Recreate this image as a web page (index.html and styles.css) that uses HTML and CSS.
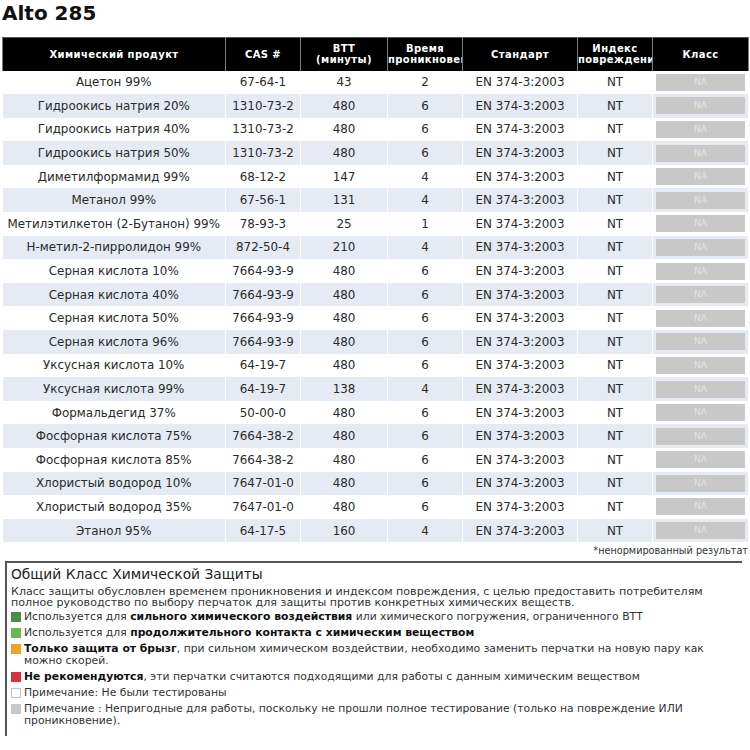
FILE: index.html
```html
<!DOCTYPE html>
<html lang="ru">
<head>
<meta charset="utf-8">
<title>Alto 285</title>
<link rel="stylesheet" href="styles.css">
</head>
<body>
<h1 class="title">Alto 285</h1>
<table class="chem">
  <colgroup>
    <col class="c1"><col class="c2"><col class="c3"><col class="c4"><col class="c5"><col class="c6"><col class="c7">
  </colgroup>
  <thead>
    <tr>
      <th><div class="hc">Химический продукт</div></th>
      <th><div class="hc">CAS #</div></th>
      <th><div class="hc">BTT<br>(минуты)</div></th>
      <th><div class="hc">Время<br>проникновения</div></th>
      <th><div class="hc">Стандарт</div></th>
      <th><div class="hc">Индекс<br>повреждения</div></th>
      <th><div class="hc">Класс</div></th>
    </tr>
  </thead>
  <tbody>
    <tr><td>Ацетон 99%</td><td>67-64-1</td><td>43</td><td>2</td><td>EN 374-3:2003</td><td>NT</td><td><span class="na">NA</span></td></tr>
    <tr><td>Гидроокись натрия 20%</td><td>1310-73-2</td><td>480</td><td>6</td><td>EN 374-3:2003</td><td>NT</td><td><span class="na">NA</span></td></tr>
    <tr><td>Гидроокись натрия 40%</td><td>1310-73-2</td><td>480</td><td>6</td><td>EN 374-3:2003</td><td>NT</td><td><span class="na">NA</span></td></tr>
    <tr><td>Гидроокись натрия 50%</td><td>1310-73-2</td><td>480</td><td>6</td><td>EN 374-3:2003</td><td>NT</td><td><span class="na">NA</span></td></tr>
    <tr><td>Диметилформамид 99%</td><td>68-12-2</td><td>147</td><td>4</td><td>EN 374-3:2003</td><td>NT</td><td><span class="na">NA</span></td></tr>
    <tr><td>Метанол 99%</td><td>67-56-1</td><td>131</td><td>4</td><td>EN 374-3:2003</td><td>NT</td><td><span class="na">NA</span></td></tr>
    <tr><td>Метилэтилкетон (2-Бутанон) 99%</td><td>78-93-3</td><td>25</td><td>1</td><td>EN 374-3:2003</td><td>NT</td><td><span class="na">NA</span></td></tr>
    <tr><td>Н-метил-2-пирролидон 99%</td><td>872-50-4</td><td>210</td><td>4</td><td>EN 374-3:2003</td><td>NT</td><td><span class="na">NA</span></td></tr>
    <tr><td>Серная кислота 10%</td><td>7664-93-9</td><td>480</td><td>6</td><td>EN 374-3:2003</td><td>NT</td><td><span class="na">NA</span></td></tr>
    <tr><td>Серная кислота 40%</td><td>7664-93-9</td><td>480</td><td>6</td><td>EN 374-3:2003</td><td>NT</td><td><span class="na">NA</span></td></tr>
    <tr><td>Серная кислота 50%</td><td>7664-93-9</td><td>480</td><td>6</td><td>EN 374-3:2003</td><td>NT</td><td><span class="na">NA</span></td></tr>
    <tr><td>Серная кислота 96%</td><td>7664-93-9</td><td>480</td><td>6</td><td>EN 374-3:2003</td><td>NT</td><td><span class="na">NA</span></td></tr>
    <tr><td>Уксусная кислота 10%</td><td>64-19-7</td><td>480</td><td>6</td><td>EN 374-3:2003</td><td>NT</td><td><span class="na">NA</span></td></tr>
    <tr><td>Уксусная кислота 99%</td><td>64-19-7</td><td>138</td><td>4</td><td>EN 374-3:2003</td><td>NT</td><td><span class="na">NA</span></td></tr>
    <tr><td>Формальдегид 37%</td><td>50-00-0</td><td>480</td><td>6</td><td>EN 374-3:2003</td><td>NT</td><td><span class="na">NA</span></td></tr>
    <tr><td>Фосфорная кислота 75%</td><td>7664-38-2</td><td>480</td><td>6</td><td>EN 374-3:2003</td><td>NT</td><td><span class="na">NA</span></td></tr>
    <tr><td>Фосфорная кислота 85%</td><td>7664-38-2</td><td>480</td><td>6</td><td>EN 374-3:2003</td><td>NT</td><td><span class="na">NA</span></td></tr>
    <tr><td>Хлористый водород 10%</td><td>7647-01-0</td><td>480</td><td>6</td><td>EN 374-3:2003</td><td>NT</td><td><span class="na">NA</span></td></tr>
    <tr><td>Хлористый водород 35%</td><td>7647-01-0</td><td>480</td><td>6</td><td>EN 374-3:2003</td><td>NT</td><td><span class="na">NA</span></td></tr>
    <tr><td>Этанол 95%</td><td>64-17-5</td><td>160</td><td>4</td><td>EN 374-3:2003</td><td>NT</td><td><span class="na">NA</span></td></tr>
  </tbody>
</table>
<p class="footnote">*ненормированный результат</p>
<section class="legend">
  <h2 class="legend-title">Общий Класс Химической Защиты</h2>
  <p class="legend-intro">Класс защиты обусловлен временем проникновения и индексом повреждения, с целью предоставить потребителям полное руководство по выбору перчаток для защиты против конкретных химических веществ.</p>
  <ul class="legend-list">
    <li class="item"><span class="sw sw-dgreen"></span><span>Используется для <b>сильного химического воздействия</b> или химического погружения, ограниченного ВТТ</span></li>
    <li class="item"><span class="sw sw-lgreen"></span><span>Используется для <b>продолжительного контакта с химическим веществом</b></span></li>
    <li class="item"><span class="sw sw-orange"></span><span><b>Только защита от брызг</b>, при сильном химическом воздействии, необходимо заменить перчатки на новую пару как можно скорей.</span></li>
    <li class="item"><span class="sw sw-red"></span><span><b>Не рекомендуются</b>, эти перчатки считаются подходящими для работы с данным химическим веществом</span></li>
    <li class="item"><span class="sw sw-white"></span><span>Примечание: Не были тестированы</span></li>
    <li class="item"><span class="sw sw-gray"></span><span>Примечание : Непригодные для работы, поскольку не прошли полное тестирование (только на повреждение ИЛИ проникновение).</span></li>
  </ul>
</section>
</body>
</html>
```

FILE: styles.css
```css
html, body {
  margin: 0;
  padding: 0;
  background: #fff;
}
body {
  font-family: "DejaVu Sans", "Noto Sans", sans-serif;
  color: #222;
  padding: 0 2px;
  width: 746px;
}
.title {
  margin: 0;
  font-size: 20px;
  line-height: 26px;
  height: 37px;
  font-weight: bold;
  color: #111;
}
.chem {
  width: 746px;
  border-collapse: collapse;
  table-layout: fixed;
  font-size: 11.9px;
}
.c1 { width: 223px; }
.c2 { width: 75px; }
.c3 { width: 87px; }
.c4 { width: 75px; }
.c5 { width: 115px; }
.c6 { width: 75px; }
.c7 { width: 96px; }
.chem th {
  background: #000;
  color: #fff;
  font-size: 10px;
  font-weight: bold;
  letter-spacing: 0.4px;
  height: 33px;
  padding: 0;
  border-left: 1px solid #7c7c7c;
  border-right: 1px solid #7c7c7c;
  border-top: 1px solid #555;
  box-sizing: border-box;
}
.hc {
  overflow: hidden;
  white-space: nowrap;
  line-height: 11px;
  text-align: center;
}
.chem td {
  height: 23.6px;
  padding: 0;
  text-align: center;
  border-right: 1px solid #fff;
  color: #2a2a2a;
  box-sizing: border-box;
}
.chem tbody tr:nth-child(even) td {
  background: #e5eaf3;
}
.chem td:last-child {
  padding: 0 2px;
}
.na {
  display: block;
  background: #c8c8c8;
  color: #e4e4e4;
  font-size: 9px;
  height: 17px;
  line-height: 17px;
  margin: 0 1px;
}
.footnote {
  margin: 0;
  text-align: right;
  font-size: 9.7px;
  line-height: 18px;
  color: #333;
  height: 19px;
}
.legend {
  margin: 0 6px 0 3px;
  border-top: 2px solid #555;
  border-left: 2px solid #555;
  padding: 3px 0 9px 4px;
}
.legend-title {
  margin: 0;
  font-size: 13.8px;
  font-weight: normal;
  line-height: 16px;
  color: #222;
}
.legend-intro {
  margin: 3.5px 0 3.5px;
  font-size: 11.1px;
  line-height: 11px;
  color: #333;
}
.legend-list {
  list-style: none;
  margin: 0;
  padding: 0;
  font-size: 10.8px;
  line-height: 12px;
  color: #333;
}
.item {
  display: flex;
  gap: 3px;
  align-items: flex-start;
  margin-bottom: 4px;
}
.item:last-child {
  margin-bottom: 0;
}
.item b {
  color: #111;
}
.sw {
  flex: none;
  width: 10px;
  height: 10px;
  margin-top: 1px;
  box-sizing: border-box;
}
.sw-dgreen { background: #4c8c44; }
.sw-lgreen { background: #69b84e; }
.sw-orange { background: #efa12a; }
.sw-red { background: #d8323c; }
.sw-white { background: #fff; border: 1px solid #b8c4d4; }
.sw-gray { background: #c8c8c8; }
```
